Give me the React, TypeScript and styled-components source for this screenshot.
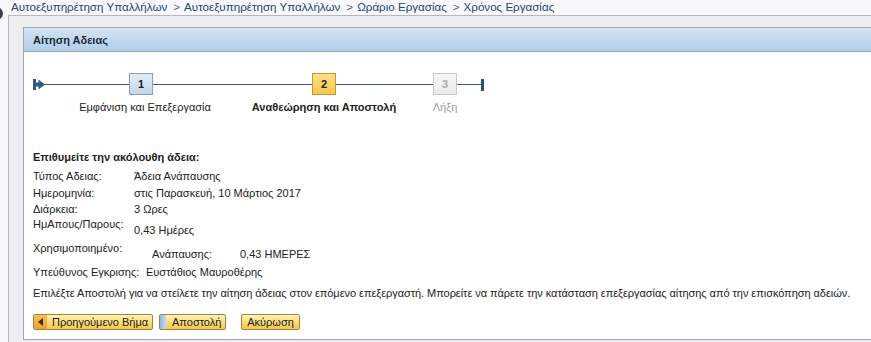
import React from "react";
import styled, { createGlobalStyle } from "styled-components";

const Global = createGlobalStyle`
  html, body { margin: 0; padding: 0; background: #f6f8fb; overflow: hidden; }
  body { font-family: "Liberation Sans", Arial, sans-serif; font-size: 11px; color: #222; }
  #root { width: 871px; height: 342px; overflow: hidden; }
`;

const Page = styled.div`
  position: relative;
  width: 871px;
  height: 342px;
  overflow: hidden;
`;

const Knob = styled.div`
  position: absolute;
  left: -10px;
  top: 7px;
  width: 13px;
  height: 13px;
  border-radius: 50%;
  background: #3b3d42;
`;

const Breadcrumb = styled.div`
  height: 15px;
  padding-left: 11px;
  display: flex;
  align-items: flex-start;
  line-height: 13px;
  font-size: 11.6px;
  color: #2a4470;
  white-space: nowrap;
`;

const Sep = styled.span`
  color: #5a6474;
  margin: 0 4px 0 6px;
`;

const Frame = styled.div`
  margin-left: 8px;
  width: 900px;
  height: 327px;
  box-sizing: border-box;
  border-top: 1px solid #b4b9c1;
  border-left: 1px solid #b4b9c1;
  background: #eceef2;
  padding: 11px 0 0 14px;
`;

const Panel = styled.div`
  height: 313px;
  box-sizing: border-box;
  border: 1px solid #9ea7b3;
  background: #fff;
  display: flex;
  flex-direction: column;
`;

const PanelHeader = styled.div`
  height: 23px;
  flex: none;
  display: flex;
  align-items: center;
  padding-left: 9px;
  background: linear-gradient(#d3e3f4, #b3cde9);
  border-bottom: 1px solid #9aa4b1;
  font-weight: bold;
  color: #1b2b3e;
`;

const PanelBody = styled.div`
  padding: 0 9px;
  display: flex;
  flex-direction: column;
  align-items: flex-start;
`;

const Stepper = styled.div`
  margin-top: 21px;
  display: flex;
  align-items: flex-start;
`;

const TrackCell = styled.div`
  height: 22px;
  display: flex;
  align-items: center;
  flex: none;
`;

const Segment = styled.div<{ $w: number }>`
  width: ${(p) => p.$w}px;
  height: 22px;
  flex: none;
  background: linear-gradient(#3f5f82, #3f5f82) no-repeat 0 11px / 100% 1px;
`;

const EndCap = styled.div`
  width: 3px;
  height: 12px;
  margin-top: 6px;
  background: #2e4e74;
  flex: none;
`;

const StepCol = styled.div`
  width: 24px;
  flex: none;
  display: flex;
  flex-direction: column;
  align-items: center;
`;

type StepState = "done" | "active" | "todo";

const StepBox = styled.div<{ $state: StepState }>`
  width: 24px;
  height: 22px;
  box-sizing: border-box;
  display: flex;
  align-items: center;
  justify-content: center;
  font-weight: bold;
  font-size: 11px;
  border: 1px solid
    ${(p) => (p.$state === "active" ? "#c9962c" : p.$state === "done" ? "#8d9db2" : "#c9c9c9")};
  background: ${(p) =>
    p.$state === "active"
      ? "linear-gradient(#fde08a, #f5c64c)"
      : p.$state === "done"
      ? "linear-gradient(#e2ecf6, #c4d6ea)"
      : "linear-gradient(#f6f6f6, #ebebeb)"};
  color: ${(p) => (p.$state === "todo" ? "#aaa" : "#222")};
`;

const StepLabel = styled.div<{ $state: StepState; $shift: number }>`
  margin-top: 5px;
  margin-left: ${(p) => p.$shift * 2}px;
  white-space: nowrap;
  line-height: 14px;
  font-weight: ${(p) => (p.$state === "active" ? "bold" : "normal")};
  color: ${(p) => (p.$state === "todo" ? "#9a9a9a" : "#222")};
`;

const Heading = styled.div`
  margin-top: 35px;
  font-weight: bold;
  line-height: 16px;
`;

const InfoGrid = styled.div`
  margin-top: 3px;
  display: grid;
  grid-template-columns: 101px auto;
  line-height: 16.5px;
  white-space: nowrap;
`;

const InfoRow = styled.div<{ $labelW: number; $offset: number; $mt: number }>`
  margin-top: ${(p) => p.$mt}px;
  display: flex;
  align-items: flex-start;
  line-height: 16px;
  white-space: nowrap;
  & > :first-child {
    width: ${(p) => p.$labelW}px;
    flex: none;
  }
  & > :last-child {
    margin-top: ${(p) => p.$offset}px;
  }
`;

const Nested = styled.div`
  display: flex;
`;

const NestedLabel = styled.span`
  width: 88px;
  padding-left: 18px;
`;

const Paragraph = styled.div`
  margin-top: 5px;
  line-height: 16px;
  white-space: nowrap;
  letter-spacing: -0.05px;
`;

const Buttons = styled.div`
  margin-top: 13px;
  display: flex;
  align-items: center;
`;

const Btn = styled.button<{ $gap?: number; $w: number; $center?: boolean }>`
  width: ${(p) => p.$w}px;
  height: 16px;
  box-sizing: border-box;
  margin: 0 0 0 ${(p) => p.$gap ?? 0}px;
  padding: 0 5px;
  display: flex;
  align-items: center;
  justify-content: ${(p) => (p.$center ? "center" : "flex-start")};
  border: 1px solid #a4833a;
  border-radius: 2px;
  background: linear-gradient(#fff1b8, #fbdb78 55%, #f3c647);
  font-family: "Liberation Sans", Arial, sans-serif;
  font-size: 11px;
  line-height: 14px;
  color: #222;
  white-space: nowrap;
  overflow: hidden;
`;

const BtnIcon = styled.span`
  width: 13px;
  height: 14px;
  flex: none;
  margin: 0 5px 0 -5px;
  display: flex;
  align-items: center;
  justify-content: center;
  background: linear-gradient(#f4c25a, #e5a234);
`;

const BtnStripe = styled.span`
  width: 6px;
  height: 14px;
  flex: none;
  margin: 0 6px 0 -5px;
  background: linear-gradient(90deg, #8fb3de, #c9dcf1);
`;

export default function App() {
  const steps: { n: number; label: string; state: StepState; shift: number }[] = [
    { n: 1, label: "Εμφάνιση και Επεξεργασία", state: "done", shift: 4 },
    { n: 2, label: "Αναθεώρηση και Αποστολή", state: "active", shift: 0 },
    { n: 3, label: "Λήξη", state: "todo", shift: 0 },
  ];
  const segs = [159, 97];
  return (
    <Page>
      <Global />
      <Knob />
      <Breadcrumb>
        Αυτοεξυπηρέτηση Υπαλλήλων<Sep>&gt;</Sep>Αυτοεξυπηρέτηση Υπαλλήλων<Sep>&gt;</Sep>Ωράριο
        Εργασίας<Sep>&gt;</Sep>Χρόνος Εργασίας
      </Breadcrumb>
      <Frame>
        <Panel>
          <PanelHeader>Αίτηση Αδειας</PanelHeader>
          <PanelBody>
            <Stepper>
              <TrackCell>
                <svg width="12" height="11" viewBox="0 0 12 11">
                  <rect x="0" y="0" width="3" height="11" fill="#2e5a8a" />
                  <rect x="3" y="3.5" width="3" height="4" fill="#2e5a8a" />
                  <polygon points="5.5,0.5 12,5.5 5.5,10.5" fill="#2e5a8a" />
                </svg>
              </TrackCell>
              <Segment $w={84} />
              {steps.map((s, i) => (
                <React.Fragment key={s.n}>
                  <StepCol>
                    <StepBox $state={s.state}>{s.n}</StepBox>
                    <StepLabel $state={s.state} $shift={s.shift}>
                      {s.label}
                    </StepLabel>
                  </StepCol>
                  {i < segs.length && <Segment $w={segs[i]} />}
                </React.Fragment>
              ))}
              <Segment $w={24} />
              <EndCap />
            </Stepper>
            <Heading>Επιθυμείτε την ακόλουθη άδεια:</Heading>
            <InfoGrid>
              <span>Τύπος Αδειας:</span>
              <span>Άδεια Ανάπαυσης</span>
              <span>Ημερομηνία:</span>
              <span>στις Παρασκευή, 10 Μάρτιος 2017</span>
              <span>Διάρκεια:</span>
              <span>3 Ωρες</span>
            </InfoGrid>
            <InfoRow $labelW={101} $offset={6} $mt={-2}>
              <span>ΗμΑπους/Παρους:</span>
              <span>0,43 Ημέρες</span>
            </InfoRow>
            <InfoRow $labelW={101} $offset={6} $mt={2}>
              <span>Χρησιμοποιημένο:</span>
              <Nested>
                <NestedLabel>Ανάπαυσης:</NestedLabel>
                <span>0,43 ΗΜΕΡΕΣ</span>
              </Nested>
            </InfoRow>
            <InfoRow $labelW={113} $offset={0} $mt={2}>
              <span>Υπεύθυνος Εγκρισης:</span>
              <span>Ευστάθιος Μαυροθέρης</span>
            </InfoRow>
            <Paragraph>
              Επιλέξτε Αποστολή για να στείλετε την αίτηση άδειας στον επόμενο επεξεργαστή. Μπορείτε να
              πάρετε την κατάσταση επεξεργασίας αίτησης από την επισκόπηση αδειών.
            </Paragraph>
            <Buttons>
              <Btn $w={120}>
                <BtnIcon>
                  <svg width="5" height="8" viewBox="0 0 5 8">
                    <polygon points="5,0 0,4 5,8" fill="#4a2a08" />
                  </svg>
                </BtnIcon>
                Προηγούμενο Βήμα
              </Btn>
              <Btn $gap={6} $w={67}>
                <BtnStripe />
                Αποστολή
              </Btn>
              <Btn $gap={15} $w={59} $center>
                Ακύρωση
              </Btn>
            </Buttons>
          </PanelBody>
        </Panel>
      </Frame>
    </Page>
  );
}
